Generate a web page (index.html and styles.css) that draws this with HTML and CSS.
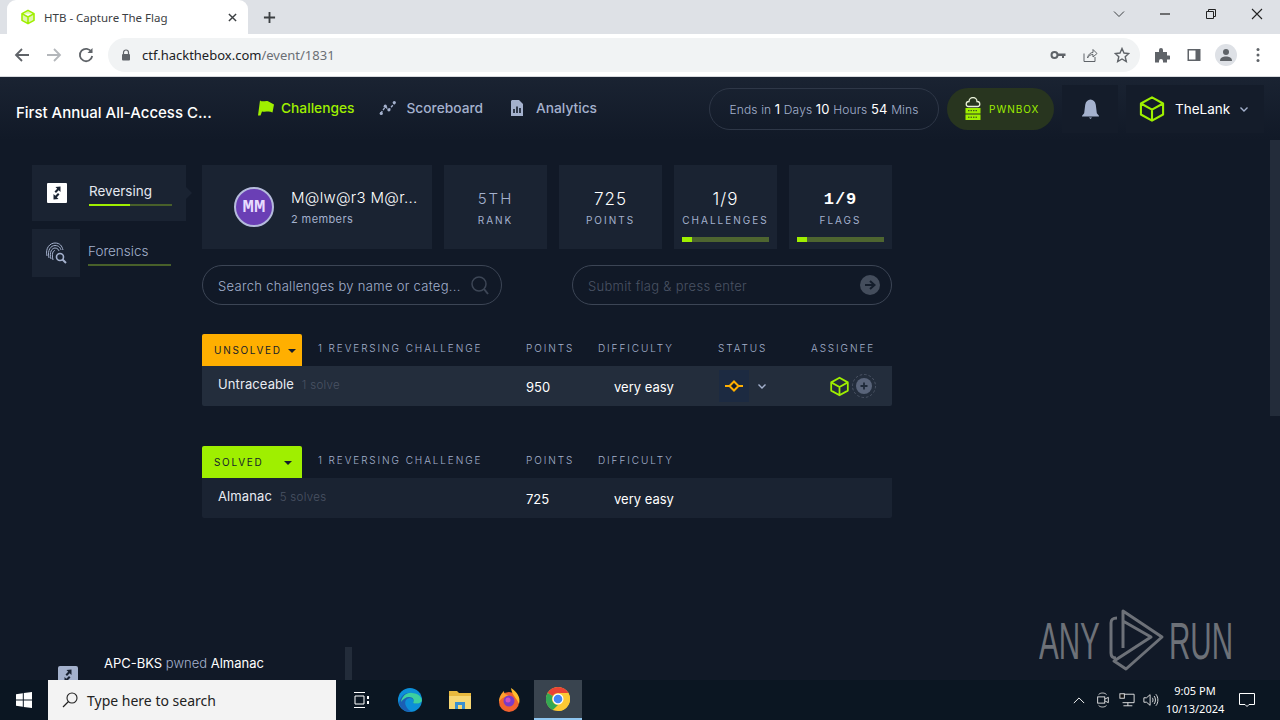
FILE: index.html
```html
<!DOCTYPE html>
<html lang="en">
<head>
    <meta charset="UTF-8">
    <meta name="viewport" content="width=device-width, initial-scale=1.0">
    <title>HTB - Capture The Flag</title>
    <link rel="stylesheet" href="styles.css">
</head>
<body>

    <!-- Browser tabs -->
    <div class="tabstrip">
        <div class="tab">
            <svg class="tab-icon" viewBox="0 0 24 24"><path d="M12 2 21 7V17L12 22 3 17V7ZM3 7 12 12 21 7M12 12V22" fill="#dff5b0" stroke="#9fef00" stroke-width="2.4" stroke-linejoin="round"/></svg>
            <span class="tab-title">HTB - Capture The Flag</span>
            <svg class="tab-close" viewBox="0 0 10 10"><path d="M1 1 9 9M9 1 1 9" stroke="#3c4043" stroke-width="1.6"/></svg>
        </div>
        <svg class="tab-new" viewBox="0 0 14 14"><path d="M7 1V13M1 7H13" stroke="#3c4043" stroke-width="2"/></svg>
        <div class="window-buttons">
            <svg viewBox="0 0 12 12"><path d="M1 3.500 6 8.500 11 3.500" fill="none" stroke="#3c4043"/></svg>
            <svg viewBox="0 0 12 12"><path d="M1 6H11" stroke="#222" stroke-width="1.200"/></svg>
            <svg viewBox="0 0 12 12"><path d="M1.500 3.500H8.500V10.500H1.500ZM3.500 3.500V1.500H10.500V8.500H8.500" fill="none" stroke="#222"/></svg>
            <svg viewBox="0 0 12 12"><path d="M1 1 11 11M11 1 1 11" stroke="#222" stroke-width="1.100"/></svg>
        </div>
    </div>

    <!-- Browser toolbar -->
    <div class="toolbar">
        <svg class="tool" viewBox="0 0 16 16"><path d="M15 8H2M8 2 2 8 8 14" fill="none" stroke="#5f6368" stroke-width="1.800"/></svg>
        <svg class="tool" viewBox="0 0 16 16"><path d="M1 8H14M8 2 14 8 8 14" fill="none" stroke="#b4b7bb" stroke-width="1.800"/></svg>
        <svg class="tool" viewBox="0 0 16 16"><path d="M13.500 5A6.200 6.200 0 1 0 14.200 9" fill="none" stroke="#5f6368" stroke-width="1.800"/><path d="M14.500 1V6H9.500Z" fill="#5f6368"/></svg>
        <div class="omnibox">
            <svg class="lock" viewBox="0 0 10 12"><path d="M2.500 5V3.500A2.500 2.500 0 0 1 7.500 3.500V5" fill="none" stroke="#5f6368" stroke-width="1.200"/><rect x="1" y="5" width="8" height="6.500" rx="1" fill="#5f6368"/></svg>
            <span class="url">ctf.hackthebox.com<span class="url-path">/event/1831</span></span>
            <div class="omni-actions">
                <svg viewBox="0 0 16 16"><circle cx="4.500" cy="8" r="3" fill="none" stroke="#5f6368" stroke-width="2"/><path d="M7 6.500H15.500V9H14V11H12V9H7Z" fill="#5f6368"/></svg>
                <svg viewBox="0 0 16 16"><path d="M2 6.500V14.500H13V10M5.500 11C6 7.500 8.500 5.500 11 5.500V2.500L15 6.500 11 10V7.500C8.500 7.500 7 8.500 5.500 11Z" fill="none" stroke="#5f6368"/></svg>
                <svg viewBox="0 0 16 16"><path d="M8 1.500 10 6 14.800 6.500 11.200 9.700 12.300 14.500 8 12 3.700 14.500 4.800 9.700 1.200 6.500 6 6Z" fill="none" stroke="#5f6368" stroke-width="1.400"/></svg>
            </div>
        </div>
        <svg class="tool ext" viewBox="0 0 16 16"><path d="M1 5H5V3A2 2 0 0 1 9 3V5H13V8.500H15A2 2 0 0 1 15 12.500H13V15.500H9V14A2 2 0 0 0 5 14V15.500H1Z" fill="#5f6368"/></svg>
        <svg class="tool" viewBox="0 0 16 16"><path d="M1.500 2H14.500V14H1.500ZM9.500 3.500H3V12.500H9.500Z" fill="#5f6368" fill-rule="evenodd"/></svg>
        <div class="profile">
            <svg viewBox="0 0 16 16"><circle cx="8" cy="5" r="3" fill="#5f6368"/><path d="M2 14C2 10.500 5 9.500 8 9.500S14 10.500 14 14Z" fill="#5f6368"/></svg>
        </div>
        <svg class="tool" viewBox="0 0 16 16"><circle cx="8" cy="2.500" r="1.500" fill="#5f6368"/><circle cx="8" cy="8" r="1.500" fill="#5f6368"/><circle cx="8" cy="13.500" r="1.500" fill="#5f6368"/></svg>
    </div>

    <div class="app">

        <!-- App header -->
        <header class="app-header">
            <div class="event-title">First Annual All-Access C...</div>
            <nav class="main-nav">
                <a class="nav-link active">
                    <svg viewBox="0 0 18 18"><path d="M3 1.500C6 3.500 9 1 11.500 2.500L17 5.500 15.500 13.500C12 11.500 8.500 13.500 5 12.500L3.500 16.500H1Z" fill="#9fef00"/></svg>
                    Challenges
                </a>
                <a class="nav-link">
                    <svg viewBox="0 0 20 18"><path d="M2 15 7 7.500 11 11 17 4" fill="none" stroke="#a4b1cd" stroke-width="1.500" stroke-dasharray="3 1.500"/><circle cx="2.500" cy="15" r="1.800" fill="#a4b1cd"/><circle cx="7" cy="7" r="1.800" fill="#a4b1cd"/><circle cx="11" cy="11" r="1.800" fill="#a4b1cd"/><circle cx="17" cy="3" r="1.800" fill="#a4b1cd"/></svg>
                    Scoreboard
                </a>
                <a class="nav-link">
                    <svg viewBox="0 0 18 18"><path d="M4 1H11L15 5V17H3V2Z" fill="#a4b1cd"/><path d="M6 14V10M9 14V7.500M12 14V9" stroke="#141d2b" stroke-width="1.600"/></svg>
                    Analytics
                </a>
            </nav>
            <div class="timer">Ends in <b>1</b> Days <b>10</b> Hours <b>54</b> Mins</div>
            <div class="pwnbox">
                <svg viewBox="0 0 18 24"><path d="M4.500 9.500A2.500 2.500 0 0 1 5 4.500 4 4 0 0 1 13 4.500 2.500 2.500 0 0 1 13.500 9.500Z" fill="none" stroke="#e8f0d8" stroke-width="1.300"/><rect x="1.500" y="11" width="15" height="5.500" fill="#9fef00"/><rect x="1.500" y="17.500" width="15" height="5.500" fill="#9fef00"/><path d="M4 13.700H14M4 20.200H14" stroke="#2a3a20" stroke-dasharray="1.500 1"/></svg>
                <span>PWNBOX</span>
            </div>
            <div class="bell-box">
                <svg viewBox="0 0 18 20"><path d="M9 1C11.500 1 13.500 3 14 6L15 14 17 16.500V17H1V16.500L3 14 4 6C4.500 3 6.500 1 9 1Z" fill="#a4b1cd"/><path d="M7.500 18H10.500L9 19.500Z" fill="#a4b1cd"/></svg>
            </div>
            <div class="user-box">
                <svg class="cube" viewBox="0 0 24 24"><path d="M12 2 21.500 7.300V16.700L12 22 2.500 16.700V7.300ZM2.500 7.300 12 12.500 21.500 7.300M12 12.500V22" fill="none" stroke="#9fef00" stroke-width="1.800" stroke-linejoin="round"/></svg>
                <span class="user-name">TheLank</span>
                <svg class="chev" viewBox="0 0 10 10"><path d="M1.500 3.500 5 7 8.500 3.500" fill="none" stroke="#a4b1cd" stroke-width="1.400"/></svg>
            </div>
        </header>

        <div class="content">

            <!-- Category list -->
            <aside class="categories">
                <div class="cat-item selected">
                    <div class="cat-icon">
                        <svg class="rev-icon" viewBox="0 0 20 20"><rect width="20" height="20" rx="1" fill="#fff"/><path d="M13.500 3.500V9L11.700 7.300 9 10 7.500 8.500 10.200 5.800 8.500 4ZM6.500 16.500V11L8.300 12.700 11 10 12.500 11.500 9.800 14.200 11.500 16Z" fill="#1a2332"/></svg>
                    </div>
                    <div class="cat-info">
                        <div class="cat-name">Reversing</div>
                        <div class="cat-bar"><div class="cat-fill"></div></div>
                    </div>
                </div>
                <div class="cat-item">
                    <div class="cat-icon boxed">
                        <svg class="print-icon" viewBox="0 0 22 22"><g fill="none" stroke="#a4b1cd" stroke-width="1"><path d="M2 14C0 6 5 1 10 1S17 4 18 8"/><path d="M4 16C2 8 6 3.500 10 3.500S15.500 6 16 8"/><path d="M6 17C4 10 7 6 10 6S13.500 8 14 9"/><path d="M8 18C6.500 12 8 8.500 10 8.500"/><circle cx="15" cy="15" r="3.500" stroke-width="1.600"/><path d="M17.500 17.500 21 21" stroke-width="2"/></g></svg>
                    </div>
                    <div class="cat-info">
                        <div class="cat-name dim">Forensics</div>
                        <div class="cat-bar"></div>
                    </div>
                </div>
            </aside>

            <main class="board">

                <!-- Team stats -->
                <section class="stats">
                    <div class="team-card">
                        <div class="team-avatar">MM</div>
                        <div>
                            <div class="team-name">M@lw@r3 M@r...</div>
                            <div class="team-members">2 members</div>
                        </div>
                    </div>
                    <div class="stat-card">
                        <div class="stat-value dim">5TH</div>
                        <div class="stat-label">RANK</div>
                    </div>
                    <div class="stat-card">
                        <div class="stat-value">725</div>
                        <div class="stat-label">POINTS</div>
                    </div>
                    <div class="stat-card">
                        <div class="stat-value">1/9</div>
                        <div class="stat-label">CHALLENGES</div>
                        <div class="stat-bar"><div class="stat-fill"></div></div>
                    </div>
                    <div class="stat-card">
                        <div class="stat-value strong">1/9</div>
                        <div class="stat-label">FLAGS</div>
                        <div class="stat-bar"><div class="stat-fill"></div></div>
                    </div>
                </section>

                <!-- Search and flag inputs -->
                <section class="inputs">
                    <div class="pill search-pill">
                        <span class="pill-text">Search challenges by name or categ...</span>
                        <svg class="search-icon" viewBox="0 0 20 20"><circle cx="9" cy="9" r="7" fill="none" stroke="#3d4656" stroke-width="1.500"/><path d="M14 14 18 19" stroke="#3d4656" stroke-width="2"/></svg>
                    </div>
                    <div class="pill flag-pill">
                        <span class="pill-text faint">Submit flag &amp; press enter</span>
                        <svg class="go-icon" viewBox="0 0 20 20"><circle cx="10" cy="10" r="10" fill="#444d5c"/><path d="M5 10H13M10 6 14.500 10 10 14" fill="none" stroke="#141d2b" stroke-width="2"/></svg>
                    </div>
                </section>

                <!-- Unsolved -->
                <section class="group">
                    <div class="group-head">
                        <div class="tag orange"><span>UNSOLVED</span><i class="caret"></i></div>
                        <div class="head-label">1 REVERSING CHALLENGE</div>
                        <div class="head-label">POINTS</div>
                        <div class="head-label">DIFFICULTY</div>
                        <div class="head-label">STATUS</div>
                        <div class="head-label">ASSIGNEE</div>
                    </div>
                    <div class="row light">
                        <div class="row-name">Untraceable <span class="solves">1 solve</span></div>
                        <div class="row-points">950</div>
                        <div class="row-diff">very easy</div>
                        <div class="row-status">
                            <div class="status-box">
                                <svg viewBox="0 0 20 12"><path d="M1 6H19" stroke="#ffaf00" stroke-width="2"/><path d="M10 1.500 14.500 6 10 10.500 5.500 6Z" fill="#141d2b" stroke="#ffaf00" stroke-width="2"/></svg>
                            </div>
                            <svg class="chev" viewBox="0 0 10 10"><path d="M1.500 3.500 5 7 8.500 3.500" fill="none" stroke="#a4b1cd" stroke-width="1.400"/></svg>
                        </div>
                        <div class="row-assignee">
                            <svg class="mini-cube" viewBox="0 0 24 24"><path d="M12 2 21.500 7.300V16.700L12 22 2.500 16.700V7.300ZM2.500 7.300 12 12.500 21.500 7.300M12 12.500V22" fill="none" stroke="#9fef00" stroke-width="2" stroke-linejoin="round"/></svg>
                            <svg class="add-user" viewBox="0 0 24 24"><circle cx="12" cy="12" r="11.500" fill="none" stroke="#4a5364" stroke-dasharray="2.500 2"/><circle cx="12" cy="12" r="8" fill="#59647a"/><path d="M12 8.500V15.500M8.500 12H15.500" stroke="#1f2a3a" stroke-width="1.800"/></svg>
                        </div>
                    </div>
                </section>

                <!-- Solved -->
                <section class="group">
                    <div class="group-head">
                        <div class="tag green"><span>SOLVED</span><i class="caret"></i></div>
                        <div class="head-label">1 REVERSING CHALLENGE</div>
                        <div class="head-label">POINTS</div>
                        <div class="head-label">DIFFICULTY</div>
                    </div>
                    <div class="row">
                        <div class="row-name">Almanac <span class="solves">5 solves</span></div>
                        <div class="row-points">725</div>
                        <div class="row-diff">very easy</div>
                    </div>
                </section>
            </main>
        </div>

        <!-- Overlays on the page -->
        <div class="page-scroll"></div>
        <div class="feed">
            <div class="feed-icon"><svg viewBox="0 0 20 20"><path d="M13.500 3.500V9L11.700 7.300 9 10 7.500 8.500 10.200 5.800 8.500 4ZM6.500 16.500V11L8.300 12.700 11 10 12.500 11.500 9.800 14.200 11.500 16Z" fill="#1a2332"/></svg></div>
            <div class="feed-text">APC-BKS <span>pwned</span> Almanac</div>
            <div class="feed-scroll"></div>
        </div>
        <div class="watermark">
            <span class="mark-word">ANY</span>
            <svg viewBox="0 0 66 64"><g fill="none" stroke="#6d7178" stroke-width="3" stroke-linejoin="round"><path d="M15 10C10 10 9 12 9 15V45C9 48 10 50 14 50"/><path d="M21 3 60 29 24 61 12 53 49 29 21 13ZM21 3V40"/></g></svg>
            <span class="mark-word">RUN</span>
        </div>
    </div>

    <!-- Windows taskbar -->
    <footer class="taskbar">
        <svg class="start" viewBox="0 0 16 16"><path d="M0 2.300 6.800 1.300V7.500H0ZM7.800 1.100 16 0V7.500H7.800ZM0 8.500H6.800V14.700L0 13.700ZM7.800 8.500H16V16L7.800 14.900Z" fill="#fff"/></svg>
        <div class="task-search">
            <svg viewBox="0 0 16 16"><circle cx="10" cy="6" r="5" fill="none" stroke="#222" stroke-width="1.100"/><path d="M6.500 9.500 1 15" stroke="#222" stroke-width="1.300"/></svg>
            <span>Type here to search</span>
        </div>
        <div class="task-icons">
            <div class="task-app">
                <svg class="taskview" viewBox="0 0 16 16"><path d="M1 .5H12M1 15.500H12M2 4H11V12H2Z" fill="none" stroke="#fff"/><rect x="14" y="4" width="2" height="3" fill="#fff"/><rect x="14" y="9" width="2" height="3" fill="#fff"/></svg>
            </div>
            <div class="task-app">
                <svg viewBox="0 0 24 24"><circle cx="12" cy="12" r="12" fill="#0c8fd8"/><path d="M1 15C3 6 9 4 14 5 20 6 23 10 24 13 23 15 19 16 15 15 17 13 15 10 12 10 8 10 6 14 8 18 9 21 12 23 14 24 6 24 2 20 1 15Z" fill="#1b5fb4"/><path d="M14 5C20 5 24 9 24 13 22 16 18 16 15 15 17 12 15 9 11 9 8 9 5 11 3 14 4 8 9 4 14 5Z" fill="#3cd0a0"/></svg>
            </div>
            <div class="task-app">
                <svg viewBox="0 0 24 22"><path d="M1 2H9L11 4H23V20H1Z" fill="#e8b93e"/><path d="M1 7H23V20H1Z" fill="#f7d774"/><rect x="7" y="13" width="10" height="7" fill="#3a8fd0"/><rect x="10" y="16" width="4" height="4" fill="#f7d774"/></svg>
            </div>
            <div class="task-app">
                <svg viewBox="0 0 24 24"><circle cx="12" cy="14" r="10" fill="#f2622e"/><path d="M14 0C20 4 24 9 22 16 20 10 15 8 14 0Z" fill="#ffbd2e"/><path d="M2 14C2 8 5 5 7 3 7 6 9 7 12 7 8 9 4 10 2 14Z" fill="#ffa02e"/><circle cx="12" cy="13" r="5.500" fill="#7a3bc8"/><circle cx="11" cy="12" r="2.500" fill="#d04fc0"/></svg>
            </div>
            <div class="task-app running">
                <svg viewBox="0 0 24 24"><circle cx="12" cy="12" r="12" fill="#fcc934"/><path d="M12 0A12 12 0 0 1 22.400 6H12A6 6 0 0 0 6.800 9L1.600 6A12 12 0 0 1 12 0Z" fill="#ea4335"/><path d="M1.600 6 6.800 9A6 6 0 0 0 12 18L6.800 23A12 12 0 0 1 1.600 6Z" fill="#34a853"/><path d="M12 24 17.200 15A6 6 0 0 0 17.200 9L22.400 6A12 12 0 0 1 12 24Z" fill="#fcc934"/><circle cx="12" cy="12" r="5.500" fill="#fff"/><circle cx="12" cy="12" r="4.300" fill="#4285f4"/></svg>
            </div>
        </div>
        <div class="tray">
            <svg class="tray-up" viewBox="0 0 14 8"><path d="M1 7 7 1 13 7" fill="none" stroke="#fff" stroke-width="1.100"/></svg>
            <svg class="tray-icon" viewBox="0 0 14 18"><path d="M2 3C4 .5 9 .5 11 3M2 15C4 17.500 9 17.500 11 15" fill="none" stroke="#ddd"/><rect x="1" y="5.500" width="8" height="7" fill="none" stroke="#eee"/><path d="M9 8 13 6V12L9 10" fill="none" stroke="#eee"/></svg>
            <svg class="tray-icon" viewBox="0 0 18 16"><path d="M4 1.500H17V11H4M10 11V14.500M5 14.500H15" fill="none" stroke="#eee"/><rect x="1" y="1" width="5" height="5" fill="#111" stroke="#eee"/></svg>
            <svg class="tray-icon" viewBox="0 0 18 16"><path d="M1 5.500H4L8 2V14L4 10.500H1Z" fill="none" stroke="#eee"/><path d="M10.500 5.500C11.500 7 11.500 9 10.500 10.500M12.500 3.500C14.500 6 14.500 10 12.500 12.500M14.500 1.500C17.500 5 17.500 11 14.500 14.500" fill="none" stroke="#eee"/></svg>
            <div class="clock">
                <div>9:05 PM</div>
                <div>10/13/2024</div>
            </div>
            <svg class="notify" viewBox="0 0 16 16"><path d="M.5 1.500H15.500V12.500H10L8 14.500 6 12.500H.5Z" fill="none" stroke="#fff"/></svg>
        </div>
    </footer>

</body>
</html>
```

FILE: styles.css
```css
/* Global Styles */
* {
    margin: 0;
    padding: 0;
    box-sizing: border-box;
}

body {
    width: 1280px;
    height: 720px;
    overflow: hidden;
    display: flex;
    flex-direction: column;
    font-family: Inter, "Liberation Sans", sans-serif;
    background-color: #111927;
}

svg {
    display: block;
    flex-shrink: 0;
}

/* Browser Tabs */
.tabstrip {
    height: 34px;
    background-color: #dee1e6;
    display: flex;
    align-items: flex-end;
    padding-left: 7px;
}

.tab {
    width: 241px;
    height: 34px;
    background-color: #ffffff;
    border-radius: 9px 9px 0 0;
    display: flex;
    align-items: center;
    padding-left: 13px;
    font-family: "Noto Sans", "Liberation Sans", sans-serif;
    font-size: 11.500px;
    color: #3c4043;
}

.tab-icon {
    width: 16px;
    height: 16px;
    margin-right: 8px;
}

.tab-title {
    flex: 1;
}

.tab-close {
    width: 9px;
    height: 9px;
    margin-right: 11px;
}

.tab-new {
    width: 13px;
    height: 13px;
    margin: 0 0 10px 15px;
}

.window-buttons {
    margin-left: auto;
    display: flex;
    gap: 34px;
    height: 34px;
    align-items: flex-start;
    padding: 8px 17px 0 0;
}

.window-buttons svg {
    width: 12px;
    height: 12px;
}

/* Browser Toolbar */
.toolbar {
    height: 43px;
    background-color: #ffffff;
    border-bottom: 1px solid #d8dade;
    display: flex;
    align-items: center;
    padding: 0 14px 1px 14px;
    gap: 16px;
}

.tool {
    width: 16px;
    height: 16px;
}

.omnibox {
    flex: none;
    width: 1032px;
    height: 34px;
    margin-left: -2px;
    border-radius: 17px;
    background-color: #f1f3f4;
    display: flex;
    align-items: center;
    padding-left: 13px;
    font-family: "Noto Sans", "Liberation Sans", sans-serif;
    font-size: 13px;
    color: #202124;
}

.lock {
    width: 10px;
    height: 12px;
    margin-right: 11px;
}

.url-path {
    color: #6b6f75;
}

.omni-actions {
    margin-left: auto;
    margin-right: 10px;
    display: flex;
    gap: 16px;
}

.omni-actions svg {
    width: 16px;
    height: 16px;
}

.ext {
    margin-left: -2px;
}

.profile {
    flex: none;
    width: 22px;
    height: 22px;
    border-radius: 50%;
    background-color: #dee1e6;
    padding: 3px;
    margin: 0 -3px 0 -3px;
}

/* App Layout */
.app {
    position: relative;
    height: 603px;
    background-color: #111927;
    overflow: hidden;
}

.app-header {
    height: 63px;
    display: flex;
    align-items: center;
    background: linear-gradient(#1a2332, #111927);
    padding-left: 16px;
}

.event-title {
    width: 241px;
    font-size: 15px;
    font-weight: 500;
    color: #ffffff;
    padding-top: 8px;
    white-space: nowrap;
}

.main-nav {
    display: flex;
    align-items: center;
    width: 452px;
    padding-bottom: 2px;
}

.nav-link {
    display: flex;
    align-items: center;
    gap: 6px;
    margin-right: 25px;
    font-size: 13.750px;
    font-weight: 500;
    color: #a4b1cd;
}

.nav-link svg {
    width: 18px;
    height: 18px;
}

.nav-link.active {
    color: #9fef00;
}

.nav-link:nth-child(2) {
    gap: 9px;
}

.nav-link:nth-child(3) {
    gap: 10px;
}

.timer {
    width: 230px;
    height: 42px;
    border: 1px solid #2e3747;
    border-radius: 21px;
    line-height: 40px;
    text-align: center;
    font-size: 12px;
    font-weight: 300;
    letter-spacing: 0.15px;
    color: #a4b1cd;
    white-space: nowrap;
}

.timer b {
    font-weight: 400;
    font-size: 13px;
    color: #ffffff;
}

.pwnbox {
    width: 107px;
    height: 42px;
    margin-left: 8px;
    border-radius: 21px;
    background-color: #28351f;
    display: flex;
    align-items: center;
    padding-left: 17px;
    gap: 7px;
    font-size: 10px;
    letter-spacing: 1px;
    color: #9fef00;
}

.pwnbox svg {
    width: 18px;
    height: 24px;
}

.bell-box {
    width: 56px;
    height: 48px;
    margin-left: 8px;
    background-color: #141c2a;
    display: flex;
    align-items: center;
    justify-content: center;
}

.bell-box svg {
    width: 19px;
    height: 22px;
}

.user-box {
    width: 138px;
    height: 48px;
    margin-left: 8px;
    background-color: #141c2a;
    display: flex;
    align-items: center;
    padding-left: 12px;
    font-size: 13.500px;
    color: #ffffff;
}

.cube {
    width: 28px;
    height: 28px;
    margin-right: 9px;
}

.user-name {
    width: 54px;
    margin-right: 10px;
}

.chev {
    width: 10px;
    height: 10px;
}

.content {
    display: flex;
    padding: 25px 0 0 32px;
}

/* Categories */
.categories {
    width: 154px;
    margin-right: 16px;
    display: flex;
    flex-direction: column;
    gap: 8px;
}

.cat-item {
    display: flex;
    align-items: center;
    height: 48px;
}

.cat-item.selected {
    height: 56px;
    background-color: #1a2332;
    position: relative;
}

.cat-item.selected::after {
    content: "";
    position: absolute;
    right: -6px;
    top: 22px;
    border-left: 6px solid #1a2332;
    border-top: 6px solid transparent;
    border-bottom: 6px solid transparent;
}

.cat-icon {
    width: 48px;
    height: 48px;
    display: flex;
    align-items: center;
    justify-content: center;
    margin-right: 8px;
}

.selected .cat-icon {
    width: 50px;
    margin-right: 7px;
}

.cat-icon.boxed {
    background-color: #1a2332;
}

.rev-icon {
    width: 20px;
    height: 20px;
}

.print-icon {
    width: 22px;
    height: 22px;
}

.cat-info {
    width: 83px;
    padding-top: 2px;
}

.cat-name {
    font-size: 13.500px;
    color: #e4e8f0;
    margin-bottom: 5px;
}

.cat-name.dim {
    font-weight: 300;
    color: #a4b1cd;
}

.cat-bar {
    height: 2px;
    background-color: #48602a;
}

.cat-fill {
    width: 41px;
    height: 2px;
    background-color: #9fef00;
}

/* Board */
.board {
    width: 690px;
}

.stats {
    display: flex;
    gap: 12px;
    height: 84px;
}

.team-card {
    width: 230px;
    background-color: #1a2332;
    display: flex;
    align-items: center;
    gap: 17px;
    padding-left: 32px;
}

.team-avatar {
    width: 40px;
    height: 40px;
    border-radius: 50%;
    border: 2px solid #b5bbdc;
    background-color: #6a3fb5;
    display: flex;
    align-items: center;
    justify-content: center;
    font-family: "Liberation Mono", monospace;
    font-size: 19px;
    font-weight: 700;
    color: #e8dcff;
}

.team-name {
    font-size: 15px;
    font-weight: 300;
    letter-spacing: 0.3px;
    color: #ffffff;
    margin-bottom: 5px;
    white-space: nowrap;
}

.team-members {
    font-size: 11px;
    letter-spacing: 0.4px;
    color: #a4b1cd;
}

.stat-card {
    position: relative;
    width: 103px;
    background-color: #1a2332;
    text-align: center;
    padding-top: 25px;
}

.stat-value {
    font-size: 17px;
    font-weight: 300;
    letter-spacing: 1px;
    line-height: 18px;
    color: #ffffff;
    margin-bottom: 5px;
}

.stat-value.dim {
    font-size: 15px;
    letter-spacing: 2px;
    color: #a4b1cd;
}

.stat-value.strong {
    font-family: "Liberation Mono", monospace;
    font-weight: 700;
    padding-top: 1px;
    margin-bottom: 4px;
}

.stat-label {
    font-size: 10px;
    letter-spacing: 2px;
    line-height: 14px;
    color: #a4b1cd;
    white-space: nowrap;
}

.stat-bar {
    position: absolute;
    left: 8px;
    right: 8px;
    bottom: 7px;
    height: 5px;
    background-color: #4e6530;
}

.stat-fill {
    width: 11%;
    height: 5px;
    background-color: #9fef00;
}

/* Inputs */
.inputs {
    display: flex;
    justify-content: space-between;
    margin: 16px 0 29px;
}

.pill {
    height: 40px;
    border: 1px solid #3c4555;
    border-radius: 20px;
    display: flex;
    align-items: center;
    justify-content: space-between;
    font-size: 13px;
    font-weight: 300;
    letter-spacing: 0.3px;
    color: #a4b1cd;
    white-space: nowrap;
}

.pill-text {
    padding-top: 1px;
}

.search-pill {
    width: 300px;
    padding: 0 11px 0 15px;
}

.flag-pill {
    width: 320px;
    padding: 0 11px 0 15px;
}

.pill-text.faint {
    color: #4a5364;
}

.search-icon {
    width: 20px;
    height: 20px;
}

.go-icon {
    width: 20px;
    height: 20px;
}

/* Challenge Groups */
.group {
    margin-bottom: 40px;
}

.group-head {
    display: grid;
    grid-template-columns: 116px 208px 72px 120px 93px 81px;
    align-items: center;
    height: 32px;
}

.tag {
    width: 100px;
    height: 32px;
    border-radius: 2px 2px 0 0;
    display: flex;
    align-items: center;
    justify-content: space-between;
    padding: 0 6px 0 12px;
    font-size: 10px;
    letter-spacing: 1.700px;
    color: #141d2b;
}

.tag.orange {
    background-color: #ffaf00;
}

.tag.green {
    background-color: #9fef00;
}

.caret {
    border-top: 4px solid #141d2b;
    border-left: 4px solid transparent;
    border-right: 4px solid transparent;
    margin-top: 2px;
}

.tag.green .caret {
    margin-right: 4px;
}

.head-label {
    font-size: 10px;
    font-weight: 300;
    letter-spacing: 1.900px;
    color: #a4b1cd;
    white-space: nowrap;
    padding-bottom: 4px;
}

.row {
    display: grid;
    grid-template-columns: 324px 72px 120px 93px 81px;
    align-items: center;
    height: 40px;
    background-color: #1a2332;
    border-radius: 0 0 2px 2px;
    font-size: 13px;
    color: #ffffff;
}

.row.light {
    background-color: #232d3c;
}

.row-name {
    padding: 0 0 4px 16px;
    letter-spacing: 0.1px;
    color: #e8ebf2;
}

.solves {
    margin-left: 4px;
    font-size: 11.500px;
    font-weight: 300;
    letter-spacing: 0.3px;
    color: #4a5364;
}

.row-points {
    padding-top: 2px;
}

.row-diff {
    padding: 2px 0 0 16px;
}

.row-status {
    display: flex;
    align-items: center;
    height: 32px;
    margin-left: 1px;
}

.status-box {
    width: 30px;
    height: 32px;
    background-color: #1c2a41;
    display: flex;
    align-items: center;
    justify-content: center;
    margin-right: 8px;
}

.status-box svg {
    width: 20px;
    height: 12px;
}

.row-assignee {
    display: flex;
    align-items: center;
    gap: 2px;
    padding-left: 18px;
}

.mini-cube {
    width: 21px;
    height: 21px;
}

.add-user {
    width: 24px;
    height: 24px;
}

/* Overlays */
.page-scroll {
    position: absolute;
    right: 0;
    top: 63px;
    width: 10px;
    height: 276px;
    background-color: #232c3a;
}

.feed {
    position: absolute;
    left: 58px;
    bottom: 0;
    width: 294px;
    height: 36px;
}

.feed-icon {
    position: absolute;
    left: 0;
    top: 22px;
    width: 20px;
    height: 20px;
    border-radius: 2px;
    background-color: #a4b1cd;
}

.feed-text {
    position: absolute;
    left: 46px;
    top: 11px;
    font-size: 13px;
    color: #ffffff;
}

.feed-text span {
    font-weight: 300;
    color: #a4b1cd;
}

.feed-scroll {
    position: absolute;
    right: 0;
    top: 3px;
    width: 7px;
    height: 33px;
    background-color: #232c3a;
}

.watermark {
    position: absolute;
    left: 1039px;
    top: 531px;
    width: 192px;
    height: 64px;
    display: flex;
    align-items: center;
    justify-content: space-between;
}

.watermark svg {
    width: 66px;
    height: 64px;
}

.mark-word {
    width: 62px;
    font-family: "Liberation Sans", sans-serif;
    font-size: 51px;
    line-height: 62px;
    color: #6d7178;
    transform: scaleX(0.58);
    transform-origin: left center;
    padding-top: 3px;
}

/* Taskbar */
.taskbar {
    height: 40px;
    background-color: #0b1622;
    display: flex;
    align-items: center;
    font-family: "Noto Sans", "Liberation Sans", sans-serif;
}

.start {
    width: 16px;
    height: 16px;
    margin: 0 16px;
}

.task-search {
    width: 288px;
    height: 40px;
    background-color: #f3f3f3;
    display: flex;
    align-items: center;
    padding-left: 14px;
    gap: 9px;
    font-size: 14px;
    color: #222222;
}

.task-search svg {
    width: 16px;
    height: 16px;
}

.task-icons {
    display: flex;
}

.task-app {
    width: 49.500px;
    height: 40px;
    display: flex;
    align-items: center;
    justify-content: center;
}

.task-app svg {
    width: 24px;
    height: 24px;
}

.task-app svg.taskview {
    width: 16px;
    height: 18px;
}

.task-app.running {
    width: 48px;
    background-color: #39444f;
    border-bottom: 2px solid #8fc6f0;
}

.tray {
    margin-left: auto;
    display: flex;
    align-items: center;
    height: 40px;
    color: #ffffff;
}

.tray-up {
    width: 12px;
    height: 7px;
    margin-right: 10px;
}

.tray-icon {
    width: 16px;
    height: 16px;
    margin-right: 8px;
}

.clock {
    width: 72px;
    margin-left: -8px;
    text-align: center;
    font-size: 11px;
    line-height: 18px;
}

.notify {
    width: 16px;
    height: 16px;
    margin: 0 25px 0 8px;
}
```
